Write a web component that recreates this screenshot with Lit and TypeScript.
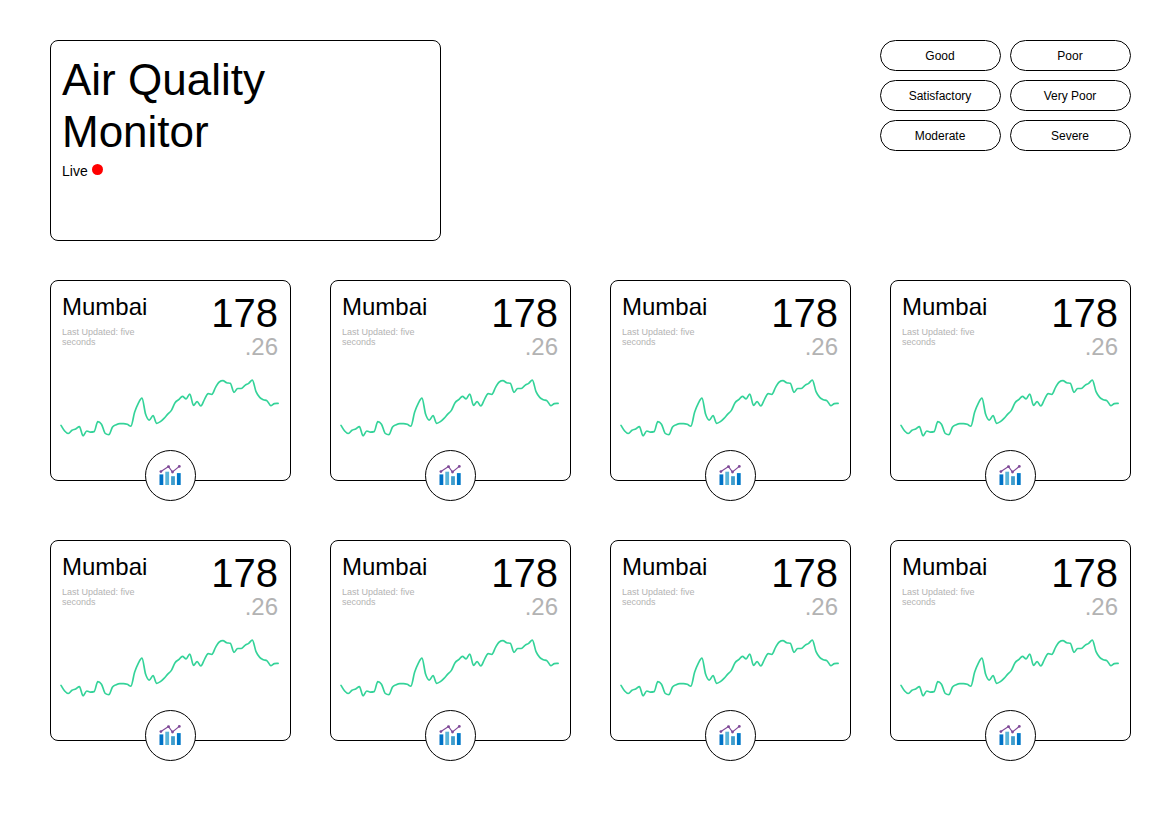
import { LitElement, html, css, svg } from "lit";
import { customElement, property } from "lit/decorators.js";

const TREND = [
  154, 171, 178.5, 169, 165, 158, 185.5, 171, 174.5, 173, 143, 150.5, 178, 182, 159, 152, 148.7, 148.7, 151, 156.5,
  115, 88, 72.5, 121, 138.5, 125, 148, 143, 133, 120.5, 109, 86, 77, 67, 74.5, 60, 94, 83, 96, 76,
  59, 61, 40, 24, 20, 26, 28, 55, 43.5, 43.5, 34, 28, 18.5, 53, 70, 77, 80.5, 95, 89, 88,
];
const STEP = 11.04;

/** Cubic path through evenly spaced values that never overshoots between two of them. */
function monotonePath(values: number[], step: number): string {
  const n = values.length;
  const slope = (i: number) => (values[i + 1] - values[i]) / step;
  const tangents = values.map((_, i) => {
    if (i === 0) return slope(0);
    if (i === n - 1) return slope(n - 2);
    const a = slope(i - 1);
    const b = slope(i);
    return (Math.sign(a) + Math.sign(b)) * Math.min(Math.abs(a), Math.abs(b), Math.abs(a + b) / 4);
  });
  let d = `M0 ${values[0]}`;
  for (let i = 0; i < n - 1; i++) {
    const x = i * step;
    const t = step / 3;
    d += `C${(x + t).toFixed(2)} ${(values[i] + tangents[i] * t).toFixed(2)} ${(x + step - t).toFixed(2)} ${(values[i + 1] - tangents[i + 1] * t).toFixed(2)} ${(x + step).toFixed(2)} ${values[i + 1]}`;
  }
  return d;
}

const TREND_PATH = monotonePath(TREND, STEP);

@customElement("city-card")
export class CityCard extends LitElement {
  @property() city = "";
  @property() whole = "";
  @property() fraction = "";

  static styles = css`
    :host {
      display: block;
      position: relative;
      box-sizing: border-box;
      width: 241px;
      height: 201px;
      padding: 9px 12px 0 11px;
      border: 1px solid #000;
      border-radius: 8px;
    }
    .head {
      display: flex;
      justify-content: space-between;
      height: 84px;
    }
    .city {
      margin-top: 3px;
      font-size: 24px;
      line-height: 28px;
    }
    .updated {
      width: 90px;
      margin-top: 6px;
      font-size: 9px;
      line-height: 10px;
      color: #b3b3b3;
    }
    .reading {
      text-align: right;
    }
    .whole {
      font-size: 40px;
      line-height: 46px;
    }
    .fraction {
      margin-top: -3px;
      font-size: 24px;
      line-height: 28px;
      color: #b3b3b3;
    }
    .trend {
      display: block;
      width: 226px;
      height: 70px;
      margin-left: -6px;
    }
    .badge {
      position: absolute;
      left: 94px;
      bottom: -21px;
      box-sizing: border-box;
      width: 51px;
      height: 51px;
      border: 1px solid #000;
      border-radius: 50%;
      background: #fff;
    }
    .badge svg {
      display: block;
    }
  `;

  render() {
    return html`
      <div class="head">
        <div>
          <div class="city">${this.city}</div>
          <div class="updated">Last Updated: five seconds</div>
        </div>
        <div class="reading">
          <div class="whole">${this.whole}</div>
          <div class="fraction">${this.fraction}</div>
        </div>
      </div>
      <svg class="trend" viewBox="-15 0 678 210">
        <path d=${TREND_PATH} fill="none" stroke="#34d399" stroke-width="5" stroke-linecap="round" stroke-linejoin="round"></path>
      </svg>
      <div class="badge">
        <svg width="49" height="49" viewBox="146 451 49 49">
          <rect x="159.5" y="474.4" width="3.8" height="10.6" fill="#0072c6"></rect>
          <rect x="165.3" y="471.7" width="3.8" height="13.3" fill="#59b4d9"></rect>
          <rect x="171.1" y="476.2" width="3.8" height="8.8" fill="#3e9ccc"></rect>
          <rect x="176.9" y="473.1" width="3.8" height="11.9" fill="#0078c8"></rect>
          <path d="M160.9 471.6 168.5 466.6 172.5 472 179.3 466.4" fill="none" stroke="#804998" stroke-width="1.2"></path>
          ${[[160.9, 471.6], [168.5, 466.6], [172.5, 472], [179.3, 466.4]].map(
            ([x, y]) => svg`<circle cx=${x} cy=${y} r="1.4" fill="#804998"></circle>`,
          )}
        </svg>
      </div>
    `;
  }
}

@customElement("app-root")
export class AppRoot extends LitElement {
  static styles = css`
    :host {
      display: block;
      box-sizing: border-box;
      width: 1169px;
      height: 827px;
      padding: 40px 38px 0 50px;
      background: #fff;
      color: #000;
      font-family: "Liberation Sans", Arial, sans-serif;
    }
    .top {
      display: flex;
      justify-content: space-between;
      align-items: flex-start;
    }
    .title-box {
      box-sizing: border-box;
      width: 391px;
      height: 201px;
      padding: 13px 11px;
      border: 1px solid #000;
      border-radius: 8px;
    }
    .title {
      width: 260px;
      margin: 0;
      font-size: 44px;
      font-weight: 400;
      line-height: 52px;
    }
    .live {
      display: flex;
      gap: 4px;
      margin-top: 5px;
      font-size: 14px;
      line-height: 16px;
    }
    .dot {
      width: 11px;
      height: 11px;
      margin-top: 1px;
      border-radius: 50%;
      background: #f00;
    }
    .levels {
      display: grid;
      grid-template-columns: 121px 121px;
      gap: 9px;
    }
    .level {
      box-sizing: border-box;
      height: 31px;
      border: 1px solid #000;
      border-radius: 15.5px;
      font-size: 12px;
      line-height: 30px;
      text-align: center;
      padding-right: 1px;
    }
    .cards {
      display: grid;
      grid-template-columns: repeat(4, 241px);
      column-gap: 39px;
      row-gap: 59px;
      margin-top: 39px;
    }
  `;

  private levels = ["Good", "Poor", "Satisfactory", "Very Poor", "Moderate", "Severe"];
  private cities = Array.from({ length: 8 }, () => ({ city: "Mumbai", whole: "178", fraction: ".26" }));

  render() {
    return html`
      <div class="top">
        <div class="title-box">
          <h1 class="title">Air Quality Monitor</h1>
          <div class="live"><span>Live</span><span class="dot"></span></div>
        </div>
        <div class="levels">${this.levels.map((l) => html`<div class="level">${l}</div>`)}</div>
      </div>
      <div class="cards">
        ${this.cities.map(
          (c) => html`<city-card .city=${c.city} .whole=${c.whole} .fraction=${c.fraction}></city-card>`,
        )}
      </div>
    `;
  }
}
